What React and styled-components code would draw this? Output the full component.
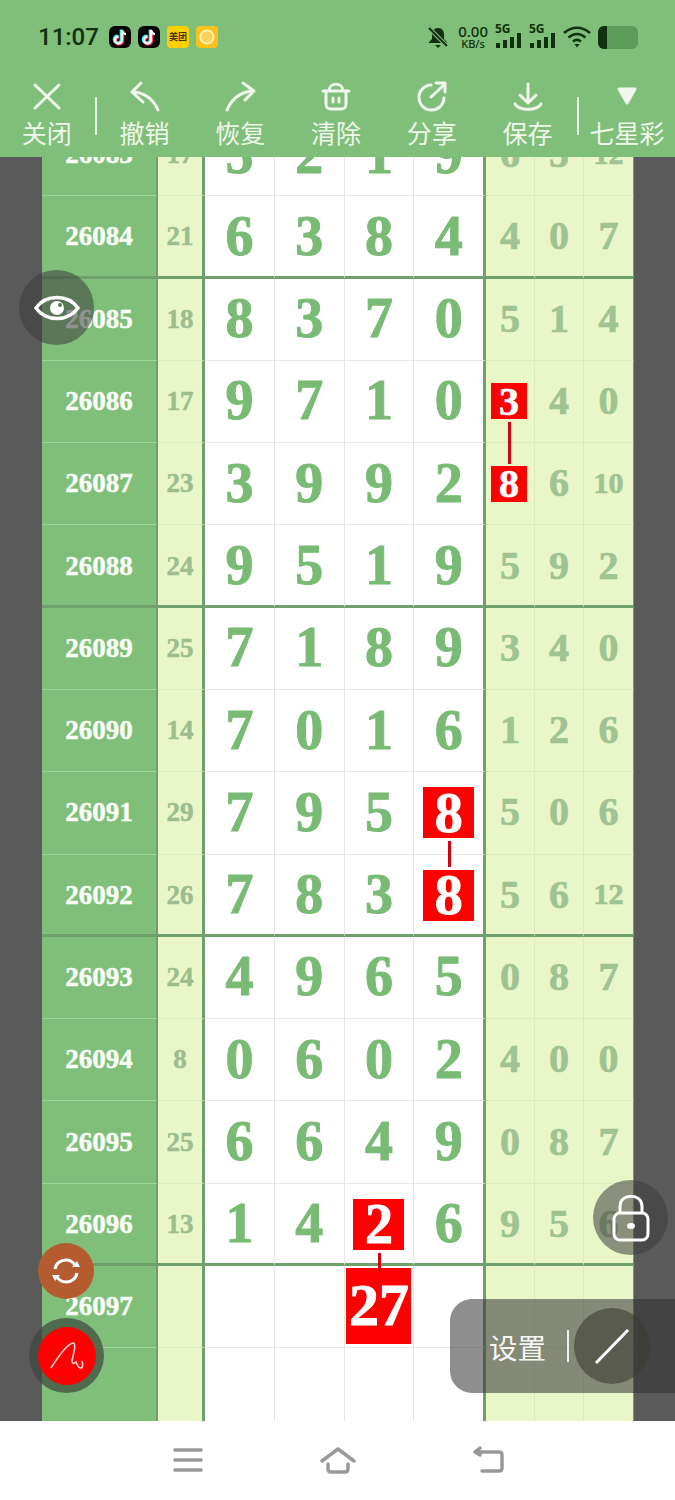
import React from 'react';
import styled, { createGlobalStyle } from 'styled-components';

const rows = [
  { id: '26083', sum: '17', main: '5219', right: ['6', '5', '12'] },
  { id: '26084', sum: '21', main: '6384', right: ['4', '0', '7'] },
  { id: '26085', sum: '18', main: '8370', right: ['5', '1', '4'] },
  { id: '26086', sum: '17', main: '9710', right: ['3', '4', '0'], rightHit: true, rightLink: true },
  { id: '26087', sum: '23', main: '3992', right: ['8', '6', '10'], rightHit: true },
  { id: '26088', sum: '24', main: '9519', right: ['5', '9', '2'] },
  { id: '26089', sum: '25', main: '7189', right: ['3', '4', '0'] },
  { id: '26090', sum: '14', main: '7016', right: ['1', '2', '6'] },
  { id: '26091', sum: '29', main: '7958', right: ['5', '0', '6'], hit: 3, link: true },
  { id: '26092', sum: '26', main: '7838', right: ['5', '6', '12'], hit: 3 },
  { id: '26093', sum: '24', main: '4965', right: ['0', '8', '7'] },
  { id: '26094', sum: '8', main: '0602', right: ['4', '0', '0'] },
  { id: '26095', sum: '25', main: '6649', right: ['0', '8', '7'] },
  { id: '26096', sum: '13', main: '1426', right: ['9', '5', '6'], hit: 2, link: true },
  { id: '26097', sum: '', main: '', right: ['', '', ''], big: '27' },
  { id: '', sum: '', main: '', right: ['', '', ''] },
];

// the thick rule closes rows 26084, 26088, 26092, 26096
const isThick = (id) => ['26084', '26088', '26092', '26096'].includes(id);

const GlobalStyle = createGlobalStyle`
  html, body {
    margin: 0;
    padding: 0;
    background: #fff;
  }
`;

export default function App() {
  return (
    <Phone>
      <GlobalStyle />
      <Header>
        <StatusBar>
          <Time>11:07</Time>
          <AppIcons>
            <TikTokIcon />
            <TikTokIcon />
            <MeituanIcon>美团</MeituanIcon>
            <OrangeIcon />
          </AppIcons>
          <StatusRight>
            <svg width="22" height="22" viewBox="0 0 22 22">
              <path d="M11 2c-4 0-6 3-6 7v4l-3 3v1h18v-1l-3-3V9c0-4-2-7-6-7z" fill="#10300f" />
              <path d="M8 19h6l-3 3z" fill="#10300f" />
              <path d="M2 2l18 18" stroke="#7fbf7a" strokeWidth="4" />
              <path d="M2 2l18 18" stroke="#10300f" strokeWidth="2" />
            </svg>
            <Speed>
              <SpeedValue>0.00</SpeedValue>
              <SpeedUnit>KB/s</SpeedUnit>
            </Speed>
            <Signal />
            <Signal />
            <svg width="28" height="22" viewBox="0 0 28 22" fill="none" stroke="#10300f" strokeWidth="2.6">
              <path d="M1 7c8-7 18-7 26 0" />
              <path d="M5.5 11.500c5.500-4.500 11.500-4.500 17 0" />
              <path d="M10 15.500c2.500-2 5.500-2 8 0" />
              <path d="M11.500 18h5l-2.500 3.500z" fill="#10300f" stroke="none" />
            </svg>
            <Battery>
              <BatteryLevel />
            </Battery>
          </StatusRight>
        </StatusBar>
        <Toolbar>
          <ToolItem $first>
            <ToolIcon viewBox="0 0 32 32"><path d="M4 5l24 23M28 5L4 28" /></ToolIcon>
            <ToolLabel>关闭</ToolLabel>
          </ToolItem>
          <ToolDivider />
          <ToolItem>
            <ToolIcon viewBox="0 0 32 32"><path d="M12 3L3 12l11 10M3 12c11 0 21 6 26 18" /></ToolIcon>
            <ToolLabel>撤销</ToolLabel>
          </ToolItem>
          <ToolItem>
            <ToolIcon viewBox="0 0 32 32"><path d="M19 3l11 8-9 9M30 11C18 11 8 18 3 30" /></ToolIcon>
            <ToolLabel>恢复</ToolLabel>
          </ToolItem>
          <ToolItem>
            <ToolIcon viewBox="0 0 32 32">
              <path d="M3 11h26M9 11C9 2 23 2 23 11" />
              <path d="M6 11v13c0 3 2 5 5 5h10c3 0 5-2 5-5V11" />
              <path d="M13 18v4M19 18v4" />
            </ToolIcon>
            <ToolLabel>清除</ToolLabel>
          </ToolItem>
          <ToolItem>
            <ToolIcon viewBox="0 0 32 32">
              <path d="M15 5a12.500 12.500 0 1 0 13 13" />
              <path d="M15 17L29 4M20 3h9v9" />
            </ToolIcon>
            <ToolLabel>分享</ToolLabel>
          </ToolItem>
          <ToolItem>
            <ToolIcon viewBox="0 0 32 32">
              <path d="M16 4v19M8 15l8 8 8-8M3 24c4 7 22 7 26 0" />
            </ToolIcon>
            <ToolLabel>保存</ToolLabel>
          </ToolItem>
          <ToolDivider $second />
          <ToolItem $last>
            <ToolIcon viewBox="0 0 32 32"><path d="M8 9h16l-8 14z" fill="#f0f8ec" /></ToolIcon>
            <ToolLabel>七星彩</ToolLabel>
          </ToolItem>
        </Toolbar>
      </Header>

      <ChartViewport>
        <Chart>
          {rows.map((row, i) => {
            const thick = isThick(row.id);
            return (
              <Row key={i}>
                <PeriodCell $thick={thick}>{row.id}</PeriodCell>
                <SumCell $thick={thick}>{row.sum}</SumCell>
                {[0, 1, 2, 3].map((c) => (
                  <MainCell key={c} $thick={thick} $last={c === 3}>
                    {row.big && c === 2 ? (
                      <BigHit>{row.big}</BigHit>
                    ) : row.hit === c ? (
                      <MainHit>
                        {row.main[c]}
                        {row.link && <Connector $height={row.hit === 2 ? 18 : 26} />}
                      </MainHit>
                    ) : (
                      row.main[c]
                    )}
                  </MainCell>
                ))}
                {row.right.map((value, c) => (
                  <RightCell key={c} $thick={thick} $last={c === 2} $small={value.length > 1}>
                    {row.rightHit && c === 0 ? (
                      <RightHit>
                        {value}
                        {row.rightLink && <Connector $height={42} />}
                      </RightHit>
                    ) : (
                      value
                    )}
                  </RightCell>
                ))}
              </Row>
            );
          })}
        </Chart>
      </ChartViewport>

      <BottomNav>
        <NavIcon viewBox="0 0 36 28">
          <path d="M5 4h26M5 14h26M5 24h26" />
        </NavIcon>
        <NavIcon viewBox="0 0 36 28">
          <path d="M2 15L18 3l16 12M8 18v5c0 2 1 3 3 3h14c2 0 3-1 3-3v-5" />
        </NavIcon>
        <NavIcon viewBox="0 0 36 28">
          <path d="M5 6h24c2 0 3 1 3 3v13c0 2-1 3-3 3H12M5 6l5-4M5 6l5 3" />
        </NavIcon>
      </BottomNav>

      <EyeButton>
        <svg width="46" height="34" viewBox="0 0 46 34" fill="none" stroke="#fff" strokeWidth="3.500">
          <path d="M2 17C12 3 34 3 44 17 34 31 12 31 2 17z" />
          <circle cx="23" cy="17" r="7" fill="#fff" stroke="none" />
          <circle cx="26" cy="14" r="2" fill="#5a7a58" stroke="none" />
        </svg>
      </EyeButton>

      <SyncButton>
        <svg width="32" height="30" viewBox="0 0 32 30" fill="none" stroke="#fff" strokeWidth="3">
          <path d="M5 13c1-6 6-9 11-9 4 0 7 2 9 5" />
          <path d="M27 17c-1 6-6 9-11 9-4 0-7-2-9-5" />
          <path d="M22 11h8l-3-6zM10 19H2l3 6z" fill="#fff" stroke="none" />
        </svg>
      </SyncButton>

      <PenRing>
        <PenDot>
          <svg width="36" height="32" viewBox="0 0 36 32" fill="none" stroke="#ffd5d5" strokeWidth="1.600">
            <path d="M2 28C9 17 18 4 24 3c4 0 0 12-1 18 0 3 2 3 4 1 1 2 2 6 5 6 2 0 2-4 1-7" />
          </svg>
        </PenDot>
      </PenRing>

      <LockButton>
        <svg width="38" height="48" viewBox="0 0 38 48" fill="none" stroke="#fff" strokeWidth="3">
          <path d="M8 20v-8c0-13 22-13 22 0v8" />
          <rect x="2" y="19" width="34" height="27" rx="6" />
          <ellipse cx="19" cy="32" rx="4" ry="3" fill="#fff" stroke="none" />
        </svg>
      </LockButton>

      <SettingsPanel>
        <SettingsLabel>设置</SettingsLabel>
        <SettingsDivider />
        <LineButton>
          <svg width="36" height="36" viewBox="0 0 36 36" fill="none" stroke="#fff" strokeWidth="3">
            <path d="M2 35L34 2" />
          </svg>
        </LineButton>
      </SettingsPanel>
    </Phone>
  );
}

function TikTokIcon() {
  return (
    <TikTokBox>
      <svg width="22" height="22" viewBox="0 0 22 22" fill="none" strokeWidth="3">
        <path d="M13 4v10a3.500 3.500 0 1 1-3.500-3.500" stroke="#25f4ee" transform="translate(-0.8 -0.6)" />
        <path d="M13 4v10a3.500 3.500 0 1 1-3.500-3.500" stroke="#fe2c55" transform="translate(0.8 0.6)" />
        <path d="M13 4v10a3.500 3.500 0 1 1-3.500-3.500M13 4c0 2 2 4 4 4" stroke="#fff" strokeWidth="2.400" />
      </svg>
    </TikTokBox>
  );
}

function Signal() {
  return (
    <SignalBox>
      <SignalLabel>5G</SignalLabel>
      <svg width="27" height="15" viewBox="0 0 27 15" fill="#10300f">
        <rect x="1" y="10" width="4" height="5" />
        <rect x="8" y="7" width="4" height="8" />
        <rect x="15" y="4" width="4" height="11" />
        <rect x="22" y="0" width="4" height="15" />
      </svg>
    </SignalBox>
  );
}

const Phone = styled.div`
  position: relative;
  width: 675px;
  height: 1500px;
  overflow: hidden;
  display: flex;
  flex-direction: column;
  background: #fff;
`;

const Header = styled.header`
  position: relative;
  z-index: 2;
  flex: 0 0 157px;
  background: #7fbf7a;
  display: flex;
  flex-direction: column;
`;

const StatusBar = styled.div`
  height: 74px;
  display: flex;
  align-items: center;
  padding: 0 37px 0 38px;
`;

const Time = styled.span`
  font-family: Roboto, sans-serif;
  font-weight: 500;
  font-size: 24px;
  color: #10300f;
  width: 71px;
`;

const AppIcons = styled.div`
  display: flex;
  gap: 7px;
`;

const TikTokBox = styled.div`
  width: 22px;
  height: 22px;
  border-radius: 6px;
  background: #050505;
  overflow: hidden;
`;

const MeituanIcon = styled.div`
  width: 22px;
  height: 22px;
  border-radius: 4px;
  background: #ffd000;
  color: #4a3200;
  font-family: "Noto Sans CJK SC", sans-serif;
  font-weight: 700;
  font-size: 9px;
  line-height: 22px;
  text-align: center;
  overflow: hidden;
`;

const OrangeIcon = styled.div`
  width: 22px;
  height: 22px;
  border-radius: 4px;
  background: radial-gradient(circle, #fbd25a 0 5px, #fff0b0 6px 7px, #f9c21b 8px);
`;

const StatusRight = styled.div`
  margin-left: auto;
  display: flex;
  align-items: center;
  gap: 7px;
`;

const Speed = styled.div`
  display: flex;
  flex-direction: column;
  align-items: center;
  margin-left: 2px;
  color: #10300f;
  font-family: "Noto Sans", sans-serif;
  font-weight: 500;
`;

const SpeedValue = styled.span`
  font-size: 15px;
  line-height: 13px;
`;

const SpeedUnit = styled.span`
  font-size: 11px;
  line-height: 11px;
`;

const SignalBox = styled.div`
  position: relative;
  width: 27px;
  height: 22px;
  display: flex;
  align-items: flex-end;
`;

const SignalLabel = styled.span`
  position: absolute;
  top: -3px;
  left: 0;
  font-family: "Noto Sans", sans-serif;
  font-weight: 700;
  font-size: 12px;
  line-height: 12px;
  color: #10300f;
`;

const Battery = styled.div`
  width: 40px;
  height: 23px;
  border-radius: 6px;
  overflow: hidden;
  background: #5d9c58;
`;

const BatteryLevel = styled.div`
  width: 9px;
  height: 100%;
  background: #10300f;
`;

const Toolbar = styled.div`
  flex: 1;
  display: flex;
  align-items: flex-start;
`;

const ToolItem = styled.div`
  flex: ${(p) => (p.$last ? '1' : '0 0 95.750px')};
  margin-left: ${(p) => (p.$first ? '-1px' : '0')};
  height: 100%;
  display: flex;
  flex-direction: column;
  align-items: center;
  padding-top: 6px;
  box-sizing: border-box;
`;

const ToolIcon = styled.svg`
  width: 32px;
  height: 32px;
  fill: none;
  stroke: #f0f8ec;
  stroke-width: 3;
  stroke-linecap: round;
  stroke-linejoin: round;
`;

const ToolLabel = styled.span`
  font-family: "Noto Sans CJK SC", sans-serif;
  font-size: 25px;
  line-height: 32px;
  margin-top: 4px;
  color: #eef7ea;
  white-space: nowrap;
`;

const ToolDivider = styled.div`
  flex: 0 0 2px;
  height: 38px;
  margin-top: 23px;
  margin-left: ${(p) => (p.$second ? '1.500px' : '0')};
  background: #e6f3e2;
`;

const ChartViewport = styled.main`
  flex: 1;
  min-height: 0;
  overflow: hidden;
  background: #5a5a5a;
`;

const Chart = styled.div`
  width: 592px;
  margin: -43px 0 0 42px;
`;

const Row = styled.div`
  height: 82.290px;
  display: grid;
  grid-template-columns: 116px 47px 69.750px 69.750px 69.750px 71.750px 49px 49px 50px;
  font-family: "Liberation Serif", serif;
  font-weight: 700;
  -webkit-text-stroke: 0.5px currentColor;
`;

const Cell = styled.div`
  box-sizing: border-box;
  display: flex;
  align-items: center;
  justify-content: center;
  position: relative;
  padding-bottom: ${(p) => (p.$thick ? '0' : '2px')};
  border-bottom: ${(p) => (p.$thick ? '3px solid #6f9f6a' : '1px solid var(--line)')};
`;

const PeriodCell = styled(Cell)`
  --line: #a0d29b;
  background: #7fbf7a;
  border-right: 2px solid #6f9f6a;
  color: #f8fcf5;
  font-size: 27px;
  padding-bottom: 0;
  padding-top: ${(p) => (p.$thick ? '2px' : '0')};
`;

const SumCell = styled(Cell)`
  --line: #dcecbc;
  background: #e9f7c8;
  border-right: 3px solid #6f9f6a;
  color: #9dbd8e;
  font-size: 27px;
  padding-bottom: 0;
  padding-top: ${(p) => (p.$thick ? '2px' : '0')};
`;

const MainCell = styled(Cell)`
  --line: #e8e8e8;
  background: #fff;
  border-right: ${(p) => (p.$last ? '3px solid #6f9f6a' : '1px solid #e6e6e6')};
  color: #79bb75;
  font-size: 56px;
  -webkit-text-stroke: 1px currentColor;
`;

const RightCell = styled(Cell)`
  --line: #dcebbe;
  background: #e9f7c8;
  border-right: ${(p) => (p.$last ? '1px solid #6f9f6a' : '1px solid #dcebbe')};
  color: #9fc391;
  font-size: ${(p) => (p.$small ? '30px' : '40px')};
  -webkit-text-stroke: 0.7px currentColor;
`;

const Hit = styled.div`
  position: relative;
  display: flex;
  align-items: center;
  justify-content: center;
  background: #f00;
  color: #fff;
`;

const MainHit = styled(Hit)`
  width: 51px;
  height: 51px;
  margin-top: 2px;
  font-size: 56px;
`;

const RightHit = styled(Hit)`
  width: 36px;
  height: 36px;
  margin: 2px 2px 0 0;
  font-size: 40px;
`;

const BigHit = styled(Hit)`
  width: 65px;
  height: 76px;
  font-size: 60px;
`;

const Connector = styled.i`
  position: absolute;
  z-index: 1;
  top: calc(100% + 3px);
  left: 50%;
  margin-left: -1px;
  width: 3px;
  height: ${(p) => p.$height}px;
  background: #d40010;
`;

const BottomNav = styled.nav`
  flex: 0 0 79px;
  display: flex;
  align-items: flex-start;
  justify-content: center;
  gap: 114px;
  padding-top: 25px;
  box-sizing: border-box;
  background: #fff;
`;

const NavIcon = styled.svg`
  width: 36px;
  height: 28px;
  fill: none;
  stroke: #999;
  stroke-width: 3.500;
  stroke-linecap: round;
  stroke-linejoin: round;
`;

const Floating = styled.div`
  position: absolute;
  z-index: 3;
  border-radius: 50%;
  display: flex;
  align-items: center;
  justify-content: center;
`;

const EyeButton = styled(Floating)`
  left: 19px;
  top: 270px;
  width: 75px;
  height: 75px;
  background: rgba(60, 60, 60, 0.55);
`;

const SyncButton = styled(Floating)`
  left: 38px;
  top: 1243px;
  width: 56px;
  height: 56px;
  background: #b55b30;
`;

const PenRing = styled(Floating)`
  left: 29px;
  top: 1318px;
  width: 75px;
  height: 75px;
  background: rgba(60, 70, 60, 0.7);
`;

const PenDot = styled.div`
  width: 58px;
  height: 58px;
  border-radius: 50%;
  background: #f00;
  display: flex;
  align-items: center;
  justify-content: center;
`;

const LockButton = styled(Floating)`
  left: 593px;
  top: 1180px;
  width: 75px;
  height: 75px;
  background: rgba(60, 60, 60, 0.55);
`;

const SettingsPanel = styled.div`
  position: absolute;
  z-index: 3;
  left: 450px;
  top: 1299px;
  width: 225px;
  height: 94px;
  box-sizing: border-box;
  padding-left: 39px;
  border-radius: 22px 0 0 22px;
  background: rgba(50, 50, 50, 0.55);
  display: flex;
  align-items: center;
`;

const SettingsLabel = styled.span`
  font-family: "Noto Sans CJK SC", sans-serif;
  font-size: 28.500px;
  color: #f6f6f6;
`;

const SettingsDivider = styled.div`
  width: 2px;
  height: 32px;
  margin-left: 21px;
  background: #eee;
`;

const LineButton = styled.div`
  width: 76px;
  height: 76px;
  margin-left: 5px;
  border-radius: 50%;
  background: rgba(60, 60, 50, 0.6);
  display: flex;
  align-items: center;
  justify-content: center;
`;
